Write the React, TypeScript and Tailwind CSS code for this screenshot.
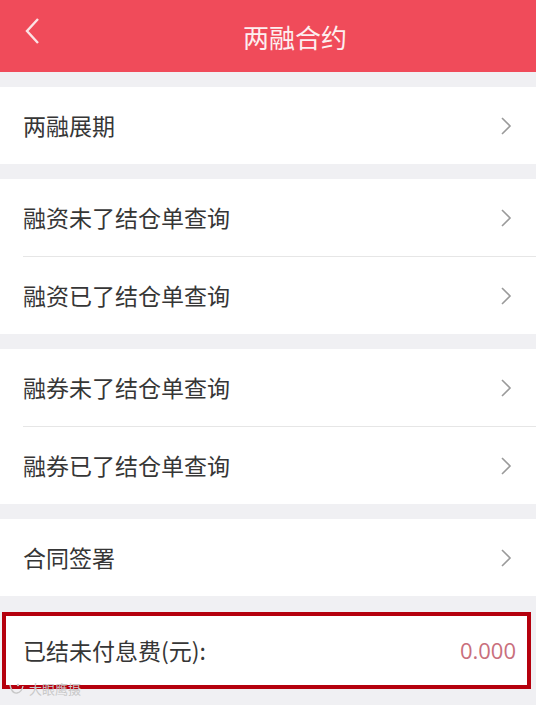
import React from 'react';

const font = '"Noto Sans CJK SC", "Liberation Sans", sans-serif';

function Chevron() {
  return (
    <svg width="14" height="22" viewBox="0 0 14 22" className="shrink-0">
      <polyline points="3,3 11,11 3,19" fill="none" stroke="#9a9a9a" strokeWidth="1.6" />
    </svg>
  );
}

function Row({ label, divider }: { label: string; divider?: boolean }) {
  return (
    <div className="bg-white">
      <div className="flex h-[77px] items-center justify-between pl-[23px] pr-[23px]">
        <span className="text-[23px] text-[#363636]">{label}</span>
        <Chevron />
      </div>
      {divider && <div className="ml-[23px] h-px bg-[#e6e6e6]" />}
    </div>
  );
}

export default function App() {
  return (
    <div className="h-[705px] w-[536px] overflow-hidden bg-[#f0f0f3]" style={{ fontFamily: font }}>
      <div className="relative flex h-[72px] items-center justify-center bg-[#f04b5a]">
        <svg width="20" height="30" viewBox="0 0 20 30" className="absolute left-[22px] top-[16px]">
          <polyline points="16,3 5,15 16,27" fill="none" stroke="#fbe3e5" strokeWidth="2.4" />
        </svg>
        <span className="pl-[54px] text-[26px] text-[#fdeff0]">两融合约</span>
      </div>

      <div className="mt-[15px]">
        <Row label="两融展期" />
      </div>
      <div className="mt-[15px]">
        <Row label="融资未了结仓单查询" divider />
        <Row label="融资已了结仓单查询" />
      </div>
      <div className="mt-[15px]">
        <Row label="融券未了结仓单查询" divider />
        <Row label="融券已了结仓单查询" />
      </div>
      <div className="mt-[15px]">
        <Row label="合同签署" />
      </div>

      <div className="relative mt-[16px]">
        <div className="ml-[2px] mr-[5px] flex h-[77px] items-center justify-between border-4 border-[#b5000d] bg-white pl-[17px] pr-[11px]">
          <span className="text-[23px] text-[#363636]">已结未付息费(元):</span>
          <span className="text-[22px] text-[#c96f7c]" style={{ fontFamily: '"Open Sans", sans-serif' }}>0.000</span>
        </div>
        <div className="absolute left-[8px] top-[67px] flex items-center gap-[3px] text-[13px] text-[#c8c8c8]">
          <svg width="18" height="14" viewBox="0 0 18 14">
            <path d="M2 3 Q4 12 9 11 Q14 10 15 4" fill="none" stroke="#c8c8c8" strokeWidth="1.4" />
            <circle cx="10" cy="3" r="1.2" fill="#c8c8c8" />
          </svg>
          <span>大眼鹰摄</span>
        </div>
      </div>
    </div>
  );
}
